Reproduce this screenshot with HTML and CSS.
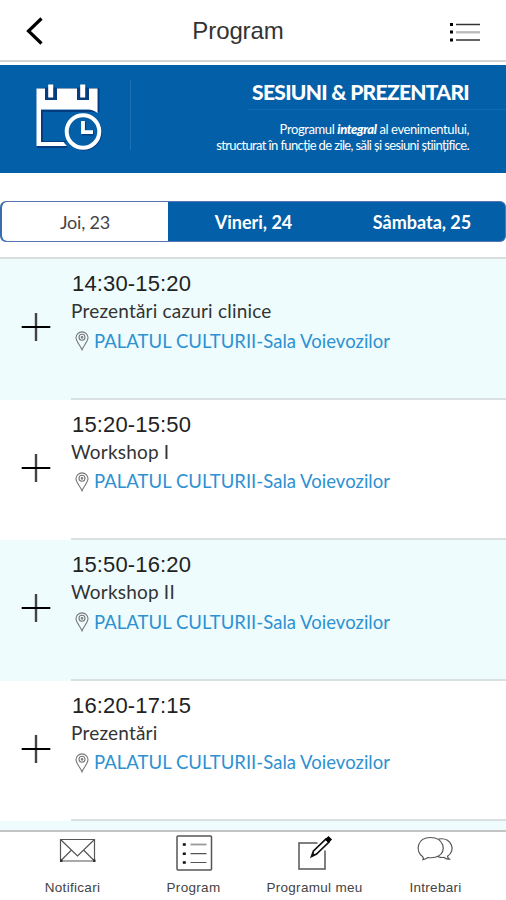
FILE: index.html
```html
<!DOCTYPE html>
<html lang="ro">
<head>
<meta charset="utf-8">
<title>Program</title>
<link rel="stylesheet" href="styles.css">
</head>
<body>
<svg class="defs" width="0" height="0" aria-hidden="true">
  <symbol id="plus" viewBox="0 0 30 30"><path d="M15 1v28" stroke="#444" stroke-width="2.400"/><path d="M.7 15h28.600" stroke="#000" stroke-width="2"/></symbol>
  <symbol id="pin" viewBox="0 0 14 20"><path d="M7 18.800C5.600 15 1 10.500 1 6.600a6 5.700 0 0 1 12 0C13 10.500 8.400 15 7 18.800z"/><circle cx="7" cy="6.300" r="3"/><circle cx="7" cy="6.300" r=".8"/></symbol>
</svg>
<div class="app">
  <header class="topbar">
    <svg class="back" viewBox="0 0 18 28"><path d="M15.500 1.500 2.500 14l13 12.500" fill="none" stroke="#000" stroke-width="3.200"/></svg>
    <h1 class="title">Program</h1>
    <svg class="menu" viewBox="0 0 32 20"><path d="M1 1.500h3M1 9h3M1 17h3" stroke="#000" stroke-width="2.800"/><path d="M7 1.500h24M7 17h24" stroke="#333" stroke-width="1.700"/><path d="M7 9.300h24" stroke="#bbb" stroke-width="2.400"/></svg>
  </header>
  <section class="banner">
    <svg class="calendar" viewBox="0 0 70 72">
      <g class="calendar-shadow"><path d="M2 5h61.500v23M3 5v58h29"/><circle cx="49" cy="48.500" r="17"/></g>
      <path class="calendar-well" d="M6 26h54v8L32 58H6z"/>
      <path class="calendar-fill" d="M8 28h54v8L32 57H8z"/>
      <path class="calendar-head" d="M1.500 4.500H62.500V29c-3-2.300-6-3.300-9-3.500H6V58h22.500a20 20 0 0 0 3.500 4H1.500z"/>
      <path d="M10 3.500h12v12.500H10zM42 3.500h12v12.500H42z" fill="#063c80"/>
      <path d="M15.700 .5v13M47.700 .5v13" stroke="#fff" stroke-width="5"/>
      <circle class="clock" cx="48" cy="47.500" r="16.300"/>
      <path d="M49 38v11.500h10" fill="none" stroke="#063c80" stroke-width="4"/>
      <path d="M48 37v11.200h10" fill="none" stroke="#fff" stroke-width="3.800"/>
    </svg>
    <div class="banner-divider"></div>
    <div class="banner-copy">
      <h2>SESIUNI &amp; PREZENTARI</h2>
      <p><span class="lead">Programul <b>integral</b> al evenimentului,</span><br><span>structurat în funcție de zile, săli și sesiuni științifice.</span></p>
    </div>
  </section>
  <nav class="tabs">
    <div class="tab active"><span>Joi, 23</span></div>
    <div class="tab"><span>Vineri, 24</span></div>
    <div class="tab"><span>Sâmbata, 25</span></div>
  </nav>
  <main class="sessions">
    <article class="session"><svg class="plus"><use href="#plus"/></svg><div class="info"><div class="time">14:30-15:20</div><div class="name">Prezentări cazuri clinice</div><div class="place"><svg class="pin"><use href="#pin"/></svg><span>PALATUL CULTURII-Sala Voievozilor</span></div></div></article>
    <article class="session"><svg class="plus"><use href="#plus"/></svg><div class="info"><div class="time">15:20-15:50</div><div class="name">Workshop I</div><div class="place"><svg class="pin"><use href="#pin"/></svg><span>PALATUL CULTURII-Sala Voievozilor</span></div></div></article>
    <article class="session"><svg class="plus"><use href="#plus"/></svg><div class="info"><div class="time">15:50-16:20</div><div class="name">Workshop II</div><div class="place"><svg class="pin"><use href="#pin"/></svg><span>PALATUL CULTURII-Sala Voievozilor</span></div></div></article>
    <article class="session"><svg class="plus"><use href="#plus"/></svg><div class="info"><div class="time">16:20-17:15</div><div class="name">Prezentări</div><div class="place"><svg class="pin"><use href="#pin"/></svg><span>PALATUL CULTURII-Sala Voievozilor</span></div></div></article>
    <article class="session"></article>
  </main>
  <footer class="bottombar">
    <div class="item mail"><svg viewBox="0 0 40 40"><path d="M2.500 8.500h34v21.500h-34zM2.500 8.500 19.500 25 36.500 8.500M2.500 30l11-11M36.500 30l-11-11"/><path d="M2 28.500h2.500V31H2zM35 28.500h2.500V31H35z" fill="#333" stroke="none"/></svg><span>Notificari</span></div>
    <div class="item"><svg viewBox="0 0 40 40"><rect x="3" y="5" width="34.500" height="34" rx="1" stroke-width="1.500"/><path d="M16.500 13.500h16" stroke="#999" stroke-width="1.800"/><path d="M16.500 22.700h16M16.500 31.500h16"/><path d="M8.800 13.500h3M8.800 22.700h3M8.800 31.500h3" stroke="#111" stroke-width="2.400"/></svg><span>Program</span></div>
    <div class="item"><svg viewBox="0 0 40 40"><path d="M22.500 12H4v26h26V19.500" stroke-width="1.500"/><path d="m16.500 25.500 2-5.500L31 8l3 3-12.500 12z" stroke="#111" stroke-width="1.700"/><path d="m31 8.500 2.500-2.500 2.500 2.500-2.500 2.500z" fill="#000" stroke="#000" stroke-width="1.500"/><path d="m16.500 25.500 1.300-4 2.500 2.500z" fill="#111" stroke="none"/></svg><span>Programul meu</span></div>
    <div class="item"><svg viewBox="0 0 40 40"><path d="M6.500 25.500C-1 20 1 6.500 14.500 6.500 28 6.500 31 20.500 22.500 25c-3.500 2-7 2-10.500 1.500-1.500 1-3 2-5 2.200.8-1.200.8-2-.5-3.200zM22.500 8c13-2 18 11.500 9 17.200 0 1.300.8 2 2 3-2.500 0-4-.7-5.500-1.800-2 .3-4 0-6-.7"/></svg><span>Intrebari</span></div>
  </footer>
</div>
</body>
</html>
```
FILE: styles.css
```css
* { box-sizing: border-box; }
body { margin: 0; background: #fff; font-family: Lato, "Noto Sans", sans-serif; color: #333; }
.defs { display: block; height: 0; }
.app { width: 506px; height: 900px; display: flex; flex-direction: column; overflow: hidden; }
.topbar { height: 62px; flex: none; display: grid; grid-template-columns: 60px 1fr 60px; border-bottom: 2px solid #d4d4d4; }
.back { width: 18px; height: 28px; margin: 17px 0 0 26px; }
.title { margin: 0; padding-right: 30px; text-align: center; font: 400 24px/61px "Liberation Sans", sans-serif; letter-spacing: -.1px; color: #333; }
.menu { width: 32px; height: 20px; margin: 23px 0 0 3px; }
.banner { height: 108px; flex: none; margin-top: 3px; background: #0360a8; display: flex; color: #fff; overflow: hidden; }
.calendar { width: 70px; height: 72px; margin: 19px 0 0 35px; flex: none; }
.calendar-shadow { fill: none; stroke: #063c80; stroke-width: 2; }
.calendar-well { fill: #063c80; }
.calendar-fill { fill: #0360a8; }
.calendar-head { fill: #fff; }
.clock { fill: #0360a8; stroke: #fff; stroke-width: 4; }
.banner-divider { width: 1px; height: 70px; margin: 15px 0 0 25px; background: #1c72b4; }
.banner-copy { flex: 1; margin-left: 116px; text-align: right; }
.banner-copy h2 { margin: 0; height: 45px; padding: 15px 37px 0 0; font-size: 21px; line-height: 24px; font-weight: 900; letter-spacing: -.7px; white-space: nowrap; border-bottom: 1px solid #1269ae; }
.banner-copy p { margin: 0 37px 0 -40px; padding-top: 11px; font-size: 13px; line-height: 16px; letter-spacing: -.63px; white-space: nowrap; }
.banner-copy .lead { letter-spacing: -.4px; }
.banner-copy b { font-weight: 900; font-style: italic; }
.tabs { height: 41px; flex: none; margin-top: 28px; display: grid; grid-template-columns: 166px 171px 1fr; background: #0360a8; border: 1px solid #5876b3; border-left: 2px solid #3b6cb0; border-radius: 6px; overflow: hidden; }
.tab { display: flex; align-items: center; justify-content: center; color: #fff; font-size: 18px; font-weight: 700; letter-spacing: 0; }
.tab.active { background: #fff; color: #444; font-weight: 400; letter-spacing: -.2px; border-radius: 5px 0 0 5px; }
.sessions { flex: 1; min-height: 0; margin-top: 15px; border-top: 2px solid #d9dede; overflow: hidden; }
.session { height: 140.600px; display: flex; background: #fff; }
.session:nth-child(odd) { background: #eefcfd; }
.plus { width: 30px; height: 30px; margin: 53px 15px 0 21px; flex: none; overflow: visible; }
.info { flex: 1; margin-left: 5px; padding-top: 12px; border-bottom: 2px solid #d9e0e1; white-space: nowrap; }
.time { padding-left: 1px; font: 22px/26px "Liberation Sans", sans-serif; letter-spacing: .15px; color: #222; }
.name { font-size: 19px; line-height: 28px; letter-spacing: .2px; color: #333; }
.place { display: flex; align-items: center; height: 31px; padding-left: 5px; color: #2d91d2; font-size: 18.500px; letter-spacing: .03px; }
.pin { width: 14px; height: 20px; margin: 1px 4px 0 -1px; flex: none; fill: none; stroke: #777; stroke-width: 1.100; }
.place span { margin-left: 1px; }
.bottombar { height: 70px; flex: none; border-top: 2px solid #c4c4c4; display: grid; grid-template-columns: 121px 121px 121px 121px; padding-left: 12px; }
.item { display: flex; flex-direction: column; align-items: center; font: 13.500px/16px "Liberation Sans", sans-serif; letter-spacing: .3px; color: #444; white-space: nowrap; }
.item svg { width: 40px; height: 40px; flex: none; fill: none; stroke: #555; stroke-width: 1.200; margin: -1px 0 9px; }
.mail svg { margin-left: 10px; }
```
